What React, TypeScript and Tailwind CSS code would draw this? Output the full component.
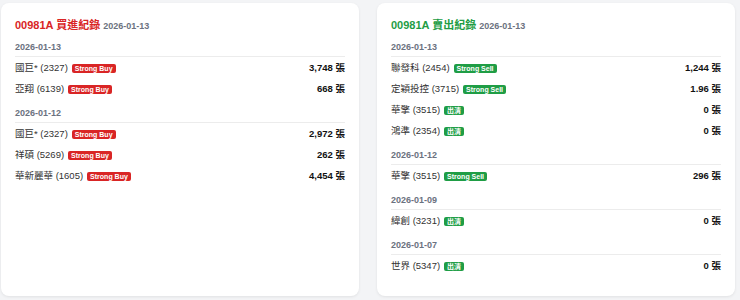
import React from "react";

type Row = { name: string; tag: string; amount: string };
type Group = { date: string; rows: Row[] };

const buyGroups: Group[] = [
  {
    date: "2026-01-13",
    rows: [
      { name: "國巨* (2327)", tag: "Strong Buy", amount: "3,748" },
      { name: "亞翔 (6139)", tag: "Strong Buy", amount: "668" },
    ],
  },
  {
    date: "2026-01-12",
    rows: [
      { name: "國巨* (2327)", tag: "Strong Buy", amount: "2,972" },
      { name: "祥碩 (5269)", tag: "Strong Buy", amount: "262" },
      { name: "華新麗華 (1605)", tag: "Strong Buy", amount: "4,454" },
    ],
  },
];

const sellGroups: Group[] = [
  {
    date: "2026-01-13",
    rows: [
      { name: "聯發科 (2454)", tag: "Strong Sell", amount: "1,244" },
      { name: "定穎投控 (3715)", tag: "Strong Sell", amount: "1.96" },
      { name: "華擎 (3515)", tag: "出清", amount: "0" },
      { name: "鴻準 (2354)", tag: "出清", amount: "0" },
    ],
  },
  {
    date: "2026-01-12",
    rows: [{ name: "華擎 (3515)", tag: "Strong Sell", amount: "296" }],
  },
  {
    date: "2026-01-09",
    rows: [{ name: "緯創 (3231)", tag: "出清", amount: "0" }],
  },
  {
    date: "2026-01-07",
    rows: [{ name: "世界 (5347)", tag: "出清", amount: "0" }],
  },
];

const font = {
  fontFamily: '"Liberation Sans", "Noto Sans CJK TC", sans-serif',
};

function TradeCard({
  title,
  date,
  groups,
  sell,
}: {
  title: string;
  date: string;
  groups: Group[];
  sell?: boolean;
}) {
  return (
    <div className="w-[358px] h-[293px] bg-white rounded-[8px] shadow-[0_1px_3px_rgba(0,0,0,0.08)] px-[14px] pt-[14px]">
      <div className="flex items-baseline gap-[3px] h-[16px] leading-[16px]">
        <span
          className={
            sell
              ? "text-[11px] font-bold text-[#1f9d45]"
              : "text-[11px] font-bold text-[#d92525]"
          }
        >
          {title}
        </span>
        <span className="text-[9px] font-bold text-[#6b7280]">{date}</span>
      </div>
      <div className="mt-[8px]">
        {groups.map((g, gi) => (
          <div key={gi} className={gi > 0 ? "mt-[7px]" : ""}>
            <div className="text-[9px] leading-[12px] font-bold text-[#6b7280] pb-[3px] border-b border-[#ececec]">
              {g.date}
            </div>
            <div className="pt-[1px]">
              {g.rows.map((r, ri) => (
                <div
                  key={ri}
                  className="h-[21px] flex items-center justify-between"
                >
                  <div className="flex items-center gap-[4px]">
                    <span className="text-[9.5px] text-[#333]">{r.name}</span>
                    <span
                      className={
                        sell
                          ? "h-[9px] px-[3px] rounded-[2px] bg-[#1f9d45] text-white text-[7px] leading-[9px] font-bold"
                          : "h-[9px] px-[3px] rounded-[2px] bg-[#d92525] text-white text-[7px] leading-[9px] font-bold"
                      }
                    >
                      {r.tag}
                    </span>
                  </div>
                  <span className="text-[9.5px] font-bold text-[#111]">
                    {r.amount} 張
                  </span>
                </div>
              ))}
            </div>
          </div>
        ))}
      </div>
    </div>
  );
}

export default function App() {
  return (
    <div
      className="w-[740px] h-[300px] bg-[#f3f4f6] pt-[3px] pl-[1px] flex gap-[18px]"
      style={font}
    >
      <TradeCard title="00981A 買進紀錄" date="2026-01-13" groups={buyGroups} />
      <TradeCard
        title="00981A 賣出紀錄"
        date="2026-01-13"
        groups={sellGroups}
        sell
      />
    </div>
  );
}
